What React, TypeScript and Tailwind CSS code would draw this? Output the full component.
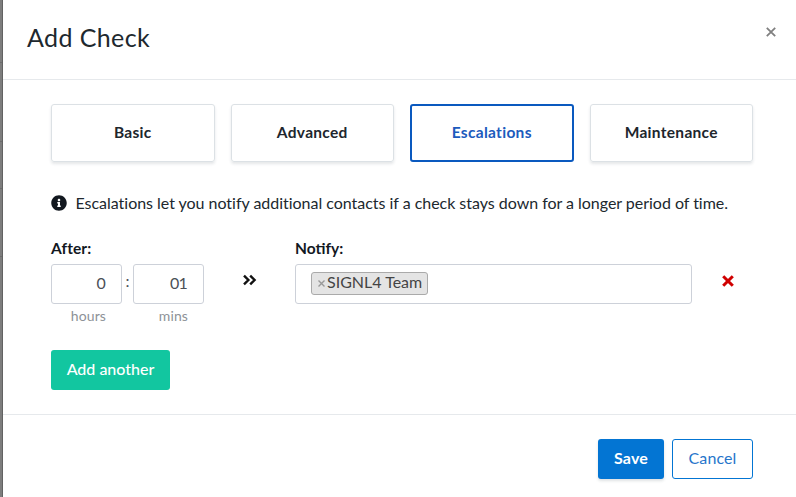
import React from "react";
import { FaInfoCircle } from "react-icons/fa";

const tabs = [
  { label: "Basic", active: false },
  { label: "Advanced", active: false },
  { label: "Escalations", active: true },
  { label: "Maintenance", active: false },
];

function Header() {
  return (
    <header className="flex h-20 items-start justify-between border-b border-[#e6e9ec] pl-6 pr-5">
      <h1 className="mt-[18px] text-[25px] leading-[38px] tracking-[0.4px] text-[#20282e]">Add Check</h1>
      <button aria-label="Close" className="mt-[27px] flex">
        <svg width="10" height="10" viewBox="0 0 10 10" stroke="#808080" strokeWidth="1.8">
          <path d="M0.8 0.8 9.2 9.2M9.2 0.8 0.8 9.2" />
        </svg>
      </button>
    </header>
  );
}

function Tabs() {
  return (
    <nav className="grid grid-cols-4 gap-4">
      {tabs.map((t) => (
        <button
          key={t.label}
          className={`h-[58px] rounded-[3px] pb-px text-[15.5px] font-bold tracking-[0.3px] ${
            t.active
              ? "border-2 border-[#0a59bf] text-[#1c5bbd]"
              : "border border-[#dce1e5] text-[#20262d] shadow-[0_2px_3px_rgba(40,60,70,0.12)]"
          }`}
        >
          {t.label}
        </button>
      ))}
    </nav>
  );
}

function TimeField({ value, unit }: { value: string; unit: string }) {
  return (
    <div className="w-[71px]">
      <div className="flex h-10 items-center justify-end rounded-[3px] border border-[#cdd1d9] pb-0.5 pr-4 text-base tracking-[-0.8px] text-[#4b5057]">
        {value}
      </div>
      <div className="mt-0.5 pr-4 text-right text-sm leading-5 tracking-[0.1px] text-[#8d9297]">{unit}</div>
    </div>
  );
}

function EscalationRow() {
  return (
    <div className="mt-6 flex h-[87px]">
      <div className="w-[153px]">
        <div className="mb-1.5 text-[15.5px] font-bold leading-5 tracking-[0.1px] text-[#12181f]">After:</div>
        <div className="flex">
          <TimeField value="0" unit="hours" />
          <span className="w-[11px] pt-[5px] text-center text-base text-[#4b5057]">:</span>
          <TimeField value="01" unit="mins" />
        </div>
      </div>
      <svg className="ml-[39px] mt-9" width="14" height="12" viewBox="0 0 14 12" fill="none" stroke="#111" strokeWidth="2.4">
        <path d="M1 1.6 5.4 6 1 10.4M7.2 1.6 11.6 6 7.2 10.4" />
      </svg>
      <div className="ml-[38px] w-[397px]">
        <div className="mb-1.5 text-[15.5px] font-bold leading-5 text-[#12181f]">Notify:</div>
        <div className="flex h-10 rounded-[3px] border border-[#cdd1d9] pl-[15px] pt-[7px]">
          <div className="flex h-[23px] w-[117px] items-center whitespace-nowrap rounded-[3px] border border-[#aaa] bg-[#e4e4e4] pl-[6px] text-base text-[#444]">
            <svg className="mb-px mr-0.5" width="7" height="7" viewBox="0 0 7 7" stroke="#999" strokeWidth="1.4">
              <path d="M0.5 0.5 6.5 6.5M6.5 0.5 0.5 6.5" />
            </svg>
            <span className="mb-[3px]">SIGNL4 Team</span>
          </div>
        </div>
      </div>
      <svg className="ml-[29.5px] mt-[37px]" width="12" height="12" viewBox="0 0 12 12" stroke="#d00000" strokeWidth="3">
        <path d="M1.2 1.2 10.8 10.8M10.8 1.2 1.2 10.8" />
      </svg>
    </div>
  );
}

export default function App() {
  return (
    <div className="flex h-[497px] w-[796px] overflow-hidden bg-white font-['Lato','Open_Sans',sans-serif]">
      <aside className="flex w-[3px] shrink-0 flex-col border-r border-[#626262] bg-[#7d7d7d]">
        <div className="mt-[62px] h-px bg-[#6c6c6c]" />
        <div className="mt-[78px] h-px bg-[#6c6c6c]" />
        <div className="mt-[46px] h-px bg-[#6c6c6c]" />
        <div className="mt-[67px] h-px bg-[#6c6c6c]" />
      </aside>
      <div className="flex-1">
        <Header />
        <main className="h-[334px] w-[750px] pl-12 pt-6">
          <Tabs />
          <p className="mt-[30px] flex h-[22px] items-center whitespace-nowrap text-base tracking-[-0.025px] text-[#20282e]">
            <FaInfoCircle className="mr-[8.5px] h-4 w-4 shrink-0 text-[#12181f]" />
            Escalations let you notify additional contacts if a check stays down for a longer period of time.
          </p>
          <EscalationRow />
          <button className="mt-[25px] h-10 w-[119px] rounded-[3px] bg-[#12c6a0] pb-0.5 text-base font-medium text-white">
            Add another
          </button>
        </main>
        <footer className="flex w-full justify-end gap-2 border-t border-[#e6e9ec] pr-[43px] pt-6">
          <button className="h-10 w-[66px] rounded-[3px] bg-[#0375d3] pb-0.5 text-base font-bold tracking-[0.2px] text-white shadow-[0_2px_3px_rgba(40,60,70,0.15)]">
            Save
          </button>
          <button className="h-10 w-[81px] rounded-[3px] border border-[#0375d3] pb-0.5 text-base tracking-[0.1px] text-[#2675cb]">
            Cancel
          </button>
        </footer>
      </div>
    </div>
  );
}
